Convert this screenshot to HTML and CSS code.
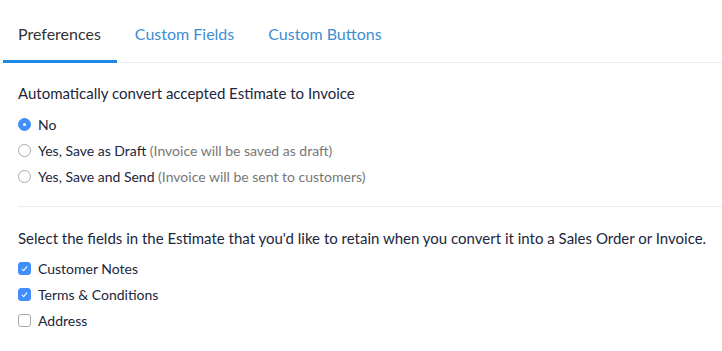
FILE: index.html
```html
<!DOCTYPE html>
<html lang="en">
<head>
    <meta charset="UTF-8">
    <title>Estimate Preferences</title>
    <link rel="stylesheet" href="styles.css">
</head>
<body>
    <nav class="tabs">
        <a class="tab tab_active">Preferences</a>
        <a class="tab">Custom Fields</a>
        <a class="tab">Custom Buttons</a>
    </nav>

    <section class="pref_section">
        <p class="pref_label">Automatically convert accepted Estimate to Invoice</p>
        <label class="option">
            <span class="radio radio_checked"></span>
            <span>No</span>
        </label>
        <label class="option">
            <span class="radio"></span>
            <span>Yes, Save as Draft <span class="hint">(Invoice will be saved as draft)</span></span>
        </label>
        <label class="option">
            <span class="radio"></span>
            <span>Yes, Save and Send <span class="hint">(Invoice will be sent to customers)</span></span>
        </label>
    </section>

    <section class="pref_section pref_section_last">
        <p class="pref_label pref_label_second">Select the fields in the Estimate that you'd like to retain when you convert it into a Sales Order or Invoice.</p>
        <label class="option option_check">
            <span class="checkbox checkbox_checked"></span>
            <span>Customer Notes</span>
        </label>
        <label class="option option_check">
            <span class="checkbox checkbox_checked"></span>
            <span>Terms &amp; Conditions</span>
        </label>
        <label class="option option_check">
            <span class="checkbox"></span>
            <span>Address</span>
        </label>
    </section>
</body>
</html>
```

FILE: styles.css
```css
body {
    margin: 0;
    font-family: 'Lato', 'Liberation Sans', sans-serif;
    color: #21263c;
    background: #fff;
}

/* Tabs row */
.tabs {
    display: flex;
    padding-left: 3px;
    border-bottom: 1px solid #eceef1;
}

.tab {
    padding: 24px 16px 16px 15px;
    margin-right: 3px;
    margin-bottom: -1px;
    font-size: 16px;
    line-height: 20px;
    color: #408dd1;
    border-bottom: 3px solid transparent;
    cursor: pointer;
}

.tab_active {
    color: #333;
    border-bottom-color: #1e88e5;
}

/* Preference blocks */
.pref_section {
    margin-left: 18px;
    padding-bottom: 17px;
    border-bottom: 1px solid #eceef1;
}

.pref_section_last {
    border-bottom: none;
}

.pref_label {
    margin: 20px 0 8px;
    font-size: 15px;
    line-height: 20px;
}

.pref_label_second {
    margin-top: 21px;
    margin-bottom: 7px;
}

.option {
    display: flex;
    align-items: center;
    height: 26px;
    font-size: 14px;
    cursor: pointer;
}

.hint {
    color: #777;
}

.radio,
.checkbox {
    box-sizing: border-box;
    width: 13px;
    height: 13px;
    margin-right: 7px;
    border: 1px solid #a9a9a9;
    background: #fff;
    position: relative;
    flex-shrink: 0;
}

.radio {
    border-radius: 50%;
}

.radio_checked {
    background: #408dfb;
    border-color: #408dfb;
}

.radio_checked::after {
    content: '';
    position: absolute;
    top: 4px;
    left: 4px;
    width: 3px;
    height: 3px;
    border-radius: 50%;
    background: #fff;
}

.checkbox {
    border-radius: 3px;
}

.checkbox_checked {
    background: #408dfb;
    border-color: #408dfb;
}

.checkbox_checked::after {
    content: '';
    position: absolute;
    top: 2px;
    left: 4px;
    width: 2px;
    height: 5px;
    border: solid #fff;
    border-width: 0 1.5px 1.5px 0;
    transform: rotate(40deg);
}
```
